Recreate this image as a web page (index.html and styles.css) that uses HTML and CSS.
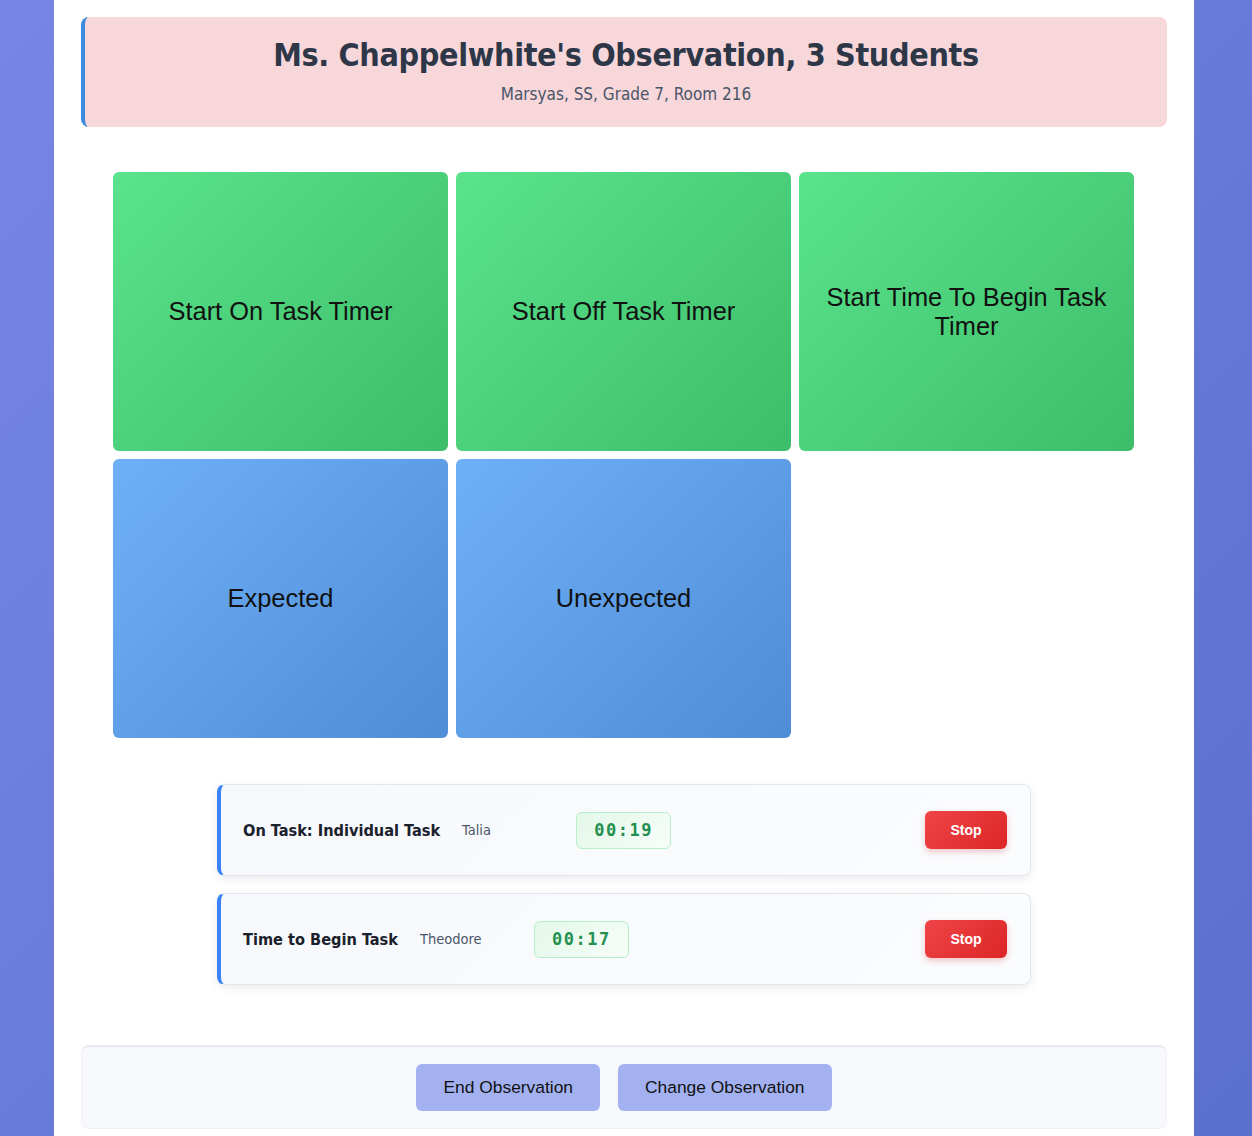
FILE: index.html
```html
<!DOCTYPE html>
<html lang="en">
<head>
<meta charset="utf-8">
<title>Observation</title>
<link rel="stylesheet" href="styles.css">
</head>
<body>
<div class="container">
  <header class="header">
    <h1 class="title">Ms. Chappelwhite's Observation, 3 Students</h1>
    <p class="subtitle">Marsyas, SS, Grade 7, Room 216</p>
  </header>

  <div class="grid">
    <button class="tile tile-green">Start On Task Timer</button>
    <button class="tile tile-green">Start Off Task Timer</button>
    <button class="tile tile-green">Start Time To Begin Task Timer</button>
    <button class="tile tile-blue">Expected</button>
    <button class="tile tile-blue">Unexpected</button>
  </div>

  <div class="timers">
    <div class="timer-card">
      <span class="timer-label">On Task: Individual Task</span>
      <span class="timer-name">Talia</span>
      <span class="timer-clock">00:19</span>
      <button class="stop-btn">Stop</button>
    </div>
    <div class="timer-card">
      <span class="timer-label">Time to Begin Task</span>
      <span class="timer-name">Theodore</span>
      <span class="timer-clock">00:17</span>
      <button class="stop-btn">Stop</button>
    </div>
  </div>

  <footer class="footer">
    <button class="footer-btn">End Observation</button>
    <button class="footer-btn">Change Observation</button>
  </footer>
</div>
</body>
</html>
```

FILE: styles.css
```css
html, body {
  margin: 0;
  padding: 0;
}
body {
  min-height: 1136px;
  background: linear-gradient(135deg, #7786e6 0%, #5b6fcd 100%);
  font-family: "DejaVu Sans Condensed", "DejaVu Sans", Verdana, sans-serif;
}
.container {
  width: 1140px;
  margin-left: 54px;
  background: #ffffff;
  box-sizing: border-box;
  padding: 17px 27px 8px;
  min-height: 1136px;
}
.header {
  background: #f8d7da;
  border-left: 4px solid #3b8be0;
  border-radius: 8px;
  height: 110px;
  box-sizing: border-box;
  padding-top: 19px;
  text-align: center;
}
.title {
  margin: 0;
  font-size: 32px;
  font-weight: bold;
  color: #2d3748;
  line-height: 38px;
  letter-spacing: -0.35px;
}
.subtitle {
  margin: 9px 0 0;
  font-size: 17px;
  color: #4a5568;
  line-height: 22px;
}
.grid {
  display: grid;
  grid-template-columns: repeat(3, 335px);
  grid-auto-rows: 279px;
  gap: 8px;
  margin: 45px 0 0 32px;
}
.tile {
  border: none;
  border-radius: 6px;
  font-family: "Liberation Sans", Arial, sans-serif;
  font-size: 25.4px;
  color: #111111;
  padding: 0 20px;
  line-height: 29px;
  cursor: pointer;
}
.tile-green {
  background: linear-gradient(135deg, #5ae38c 0%, #3dbd69 100%);
}
.tile-blue {
  background: linear-gradient(135deg, #6eb0f8 0%, #4f8dd6 100%);
}
.timers {
  width: 814px;
  margin: 46px auto 0;
  display: flex;
  flex-direction: column;
  gap: 17px;
}
.timer-card {
  display: flex;
  align-items: center;
  height: 92px;
  box-sizing: border-box;
  background: linear-gradient(135deg, #f6f8fb 0%, #fbfcfe 100%);
  border: 1px solid #e0e6ee;
  border-left: 4px solid #3b82f6;
  border-radius: 8px;
  padding: 0 23px 0 22px;
  box-shadow: 0 3px 10px rgba(0, 0, 0, 0.08);
}
.timer-label {
  font-weight: bold;
  font-size: 16.2px;
  color: #1a202c;
  margin-right: 22px;
}
.timer-name {
  font-size: 14.5px;
  color: #4a5568;
  min-width: 90px;
  margin-right: 24px;
}
.timer-clock {
  display: inline-block;
  width: 95px;
  height: 37px;
  box-sizing: border-box;
  line-height: 35px;
  text-align: center;
  font-family: "DejaVu Sans Mono", "Liberation Mono", monospace;
  font-weight: bold;
  font-size: 17px;
  letter-spacing: 1.5px;
  color: #23904f;
  background: linear-gradient(135deg, #e3f8e9 0%, #f6fdf8 100%);
  border: 1px solid #b6efc8;
  border-radius: 6px;
}
.stop-btn {
  margin-left: auto;
  width: 82px;
  height: 38px;
  border: none;
  border-radius: 6px;
  background: linear-gradient(135deg, #ef4448 0%, #dc2626 100%);
  color: #ffffff;
  font-family: "Liberation Sans", Arial, sans-serif;
  font-weight: bold;
  font-size: 14px;
  box-shadow: 0 3px 6px rgba(220, 38, 38, 0.25);
  cursor: pointer;
}
.footer {
  margin-top: 60px;
  background: #f7f8fa;
  border: 1px solid #eef0f4;
  border-top: 2px solid #e6e9ef;
  border-radius: 8px;
  height: 84px;
  box-sizing: border-box;
  display: flex;
  justify-content: center;
  align-items: center;
  gap: 18px;
}
.footer-btn {
  height: 47px;
  padding: 0 27px;
  border: none;
  border-radius: 6px;
  background: #a3b1f1;
  color: #111111;
  font-family: "Liberation Sans", Arial, sans-serif;
  font-size: 17.4px;
  cursor: pointer;
}
```
